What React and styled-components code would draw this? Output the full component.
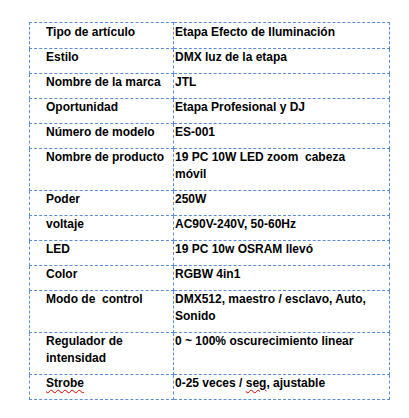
import React from "react";
import styled, { createGlobalStyle } from "styled-components";

const Global = createGlobalStyle`
  html, body { margin: 0; padding: 0; background: #fff; }
  body { font-family: "Liberation Sans", Arial, sans-serif; }
`;

const Page = styled.div`
  padding: 22px 0 0 29px;
`;

const Table = styled.table`
  border-collapse: collapse;
  width: 361px;
  table-layout: fixed;
  font-family: "Liberation Sans", Arial, sans-serif;
  font-weight: bold;
  font-size: 12px;
  line-height: 17px;
  color: #000;
`;

const Row = styled.tr`
  &:first-child > td {
    padding-top: 1px;
  }
`;

const Cell = styled.td`
  border: 1px dashed #5b8dd8;
  vertical-align: top;
  white-space: pre-wrap;
  padding: 0 ${(p) => (p.$label ? "4px" : "14px")} 7px ${(p) => (p.$label ? "16px" : "1px")};
  width: ${(p) => (p.$label ? "123px" : "auto")};
`;

const Spell = styled.span`
  text-decoration: underline wavy #e00000;
  text-decoration-thickness: 1px;
  text-underline-offset: 2px;
`;

const rows = [
  ["Tipo de artículo", "Etapa Efecto de Iluminación"],
  ["Estilo", "DMX luz de la etapa"],
  ["Nombre de la marca", "JTL"],
  ["Oportunidad", "Etapa Profesional y DJ"],
  ["Número de modelo", "ES-001"],
  ["Nombre de producto", "19 PC 10W LED zoom  cabeza móvil"],
  ["Poder", "250W"],
  ["voltaje", "AC90V-240V, 50-60Hz"],
  ["LED", "19 PC 10w OSRAM llevó"],
  ["Color", "RGBW 4in1"],
  ["Modo de  control", "DMX512, maestro / esclavo, Auto, Sonido"],
  ["Regulador de intensidad", "0 ~ 100% oscurecimiento linear"],
  [
    <Spell key="s">Strobe</Spell>,
    <React.Fragment key="v">
      0-25 veces / <Spell>seg</Spell>, ajustable
    </React.Fragment>,
  ],
];

export default function App() {
  return (
    <Page>
      <Global />
      <Table>
        <tbody>
          {rows.map(([a, b], i) => (
            <Row key={i}>
              <Cell $label>{a}</Cell>
              <Cell>{b}</Cell>
            </Row>
          ))}
        </tbody>
      </Table>
    </Page>
  );
}
